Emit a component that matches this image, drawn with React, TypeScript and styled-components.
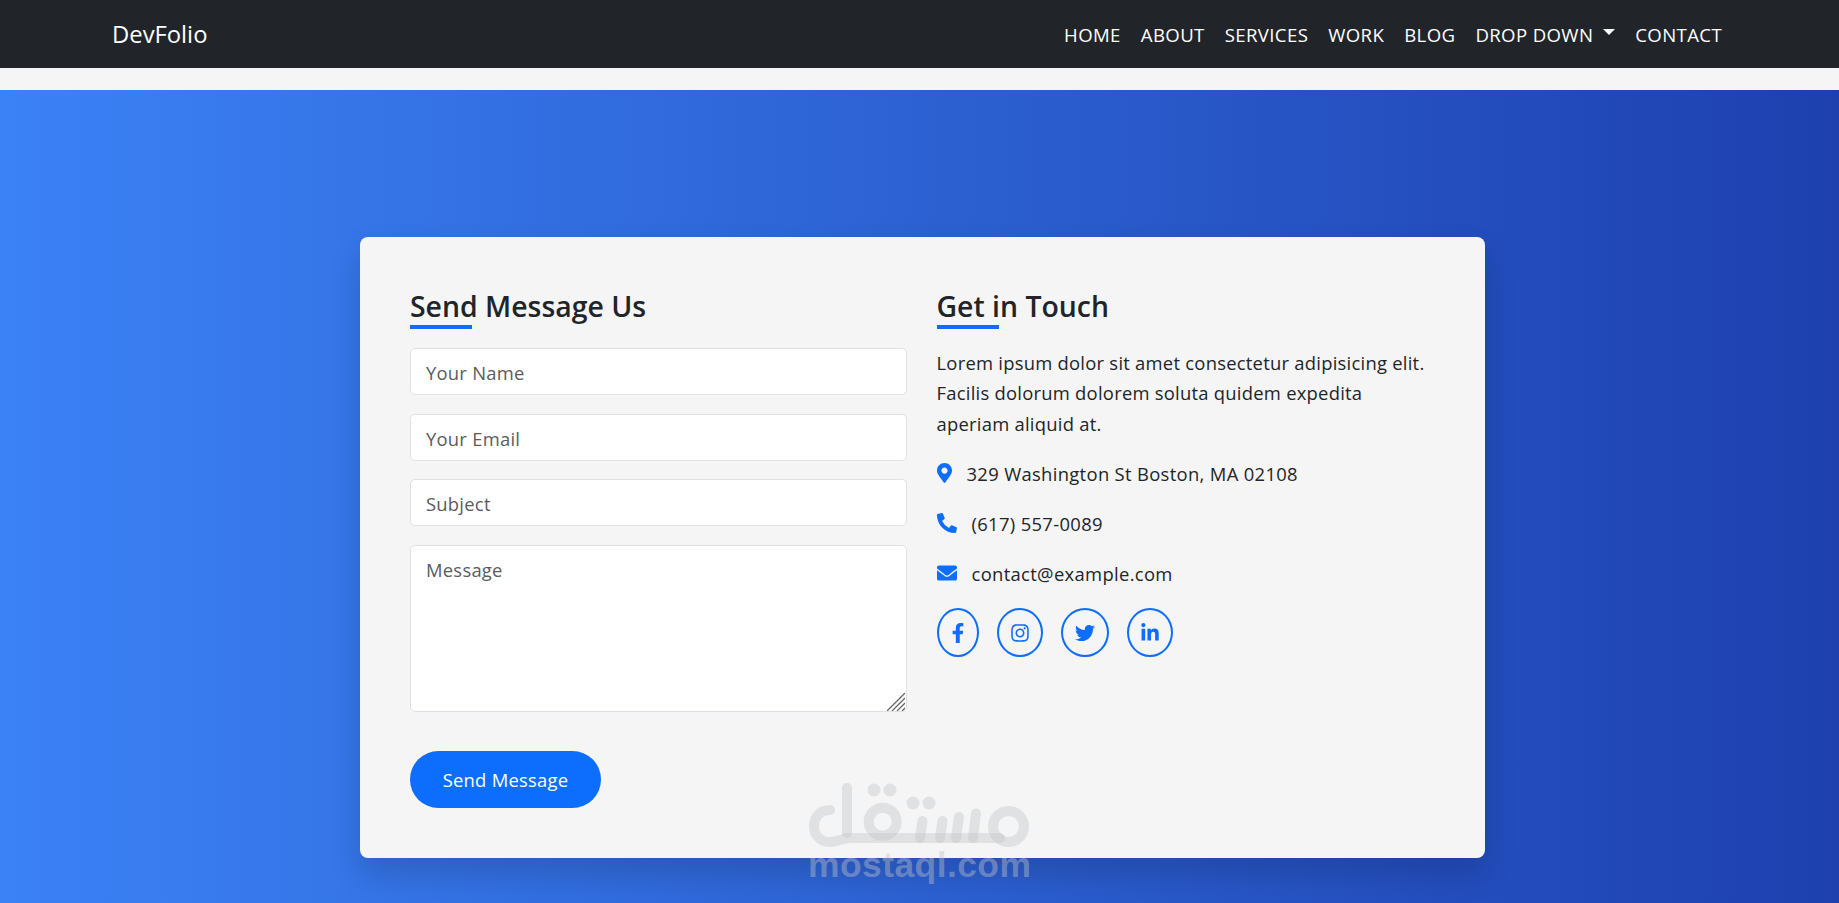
import React from "react";
import styled, { createGlobalStyle } from "styled-components";
import {
  FaEnvelope,
  FaFacebookF,
  FaInstagram,
  FaLinkedinIn,
  FaMapMarkerAlt,
  FaPhoneAlt,
  FaTwitter,
} from "react-icons/fa";

const GlobalStyle = createGlobalStyle`
  * {
    box-sizing: border-box;
  }

  html,
  body {
    margin: 0;
    height: 100%;
    background: #f5f5f5;
    font-family: "Open Sans", "Noto Sans", sans-serif;
    color: #212529;
  }
`;

const Navbar = styled.nav`
  height: 68px;
  padding: 0 117px 0 112px;
  display: flex;
  align-items: center;
  justify-content: space-between;
  background: #212529;
  color: #fff;
`;

const Brand = styled.a`
  font-size: 23.8px;
`;

const NavList = styled.div`
  display: flex;
  align-items: center;
  gap: 20px;
`;

const NavLink = styled.a`
  display: flex;
  align-items: center;
  font-size: 18.6px;
  letter-spacing: 0.37px;
`;

const Caret = styled.span`
  margin-left: 10px;
  margin-top: -4px;
  border-top: 6px solid #fff;
  border-left: 6px solid transparent;
  border-right: 6px solid transparent;
`;

const Section = styled.section`
  margin-top: 22px;
  height: 813px;
  padding-top: 147px;
  background: linear-gradient(90deg, #3b82f6, #1e40af);
`;

const Card = styled.div`
  width: 1125px;
  height: 621px;
  margin-left: 360px;
  padding: 50px;
  display: grid;
  grid-template-columns: 496.5px 1fr;
  column-gap: 30px;
  background: #f5f5f5;
  border-radius: 8px;
  box-shadow: 0 16px 32px rgba(0, 0, 0, 0.16);
`;

const Column = styled.div`
  display: flex;
  flex-direction: column;
`;

const Heading = styled.h2`
  position: relative;
  height: 40px;
  margin: 0 0 21px;
  font-size: 28.4px;
  line-height: 38px;
  font-weight: 600;

  &::after {
    content: "";
    position: absolute;
    left: 0;
    bottom: -2px;
    width: 62px;
    height: 4px;
    background: #0d6efd;
  }
`;

const Form = styled.form`
  display: flex;
  flex-direction: column;
  gap: 18.6px;
`;

const field = `
  width: 100%;
  padding: 10px 15px 8px;
  display: block;
  background: #fff;
  border: 1px solid #dee2e6;
  border-radius: 5px;
  outline: none;
  font-family: "Open Sans", "Noto Sans", sans-serif;
  font-size: 18.4px;
  letter-spacing: 0.25px;
  line-height: 27px;

  &::placeholder {
    color: #595c5f;
    opacity: 1;
  }
`;

const Input = styled.input`
  ${field}
  height: 47px;
`;

const MessageBox = styled.div`
  position: relative;
  height: 167px;
`;

const TextArea = styled.textarea`
  ${field}
  height: 100%;
  resize: none;
`;

const ResizeGrip = styled.svg`
  position: absolute;
  right: 2px;
  bottom: 1px;
  width: 18px;
  height: 18px;
`;

const SendButton = styled.button`
  width: 191px;
  height: 57px;
  margin-top: 21px;
  border: 0;
  border-radius: 29px;
  background: #0d6efd;
  color: #fff;
  font-family: "Open Sans", "Noto Sans", sans-serif;
  font-size: 18.4px;
  letter-spacing: 0.25px;
`;

const Paragraph = styled.p`
  margin: 0 0 19px;
  font-size: 18.4px;
  line-height: 30.4px;
  letter-spacing: 0.25px;
`;

const ContactRow = styled.div<{ $iconWidth: number }>`
  height: 30px;
  margin-bottom: 20px;
  display: flex;
  align-items: center;
  gap: 15px;
  font-size: 18.4px;
  letter-spacing: 0.33px;
  color: #212529;

  svg {
    width: ${(props) => props.$iconWidth}px;
    height: 20px;
    color: #0d6efd;
    flex-shrink: 0;
  }
`;

const SocialRow = styled.div`
  display: flex;
  gap: 18px;
`;

const SocialLink = styled.a<{ $width: number }>`
  width: ${(props) => props.$width}px;
  height: 49px;
  display: flex;
  align-items: center;
  justify-content: center;
  border: 2px solid #0d6efd;
  border-radius: 50%;
  color: #0d6efd;
  font-size: 20px;
`;

const Watermark = styled.div`
  position: absolute;
  left: 808px;
  top: 783px;
  width: 224px;
  color: rgba(195, 197, 200, 0.42);
  pointer-events: none;

  svg {
    display: block;
  }
`;

const WatermarkUrl = styled.div`
  margin-top: -3px;
  font-family: "Liberation Sans", Arial, sans-serif;
  font-size: 35.5px;
  line-height: 38px;
  font-weight: 700;
  letter-spacing: 0.4px;
`;

// mostaql logo, drawn with round strokes
const WatermarkLogo = () => (
  <svg width="224" height="66" viewBox="0 0 224 66" fill="none" aria-label="mostaql">
    <g stroke="currentColor" strokeWidth="10" strokeLinecap="round" strokeLinejoin="round">
      <path d="M22 27C11 27 6 35 6 43C6 53 13 59 22 59C30 59 34 55 42 55H192" />
      <path d="M39 5V50" />
      <circle cx="74.7" cy="38.7" r="14" />
      <path d="M112 55L114.5 38" />
      <path d="M132 55L134.5 38" />
      <path d="M148 55L151 34" />
      <path d="M165 55L168 30.5" />
      <circle cx="200.5" cy="43.5" r="15.5" />
    </g>
    <g fill="currentColor">
      <circle cx="66" cy="7" r="6.5" />
      <circle cx="82" cy="7" r="6.5" />
      <circle cx="105" cy="20" r="6.5" />
      <circle cx="121" cy="20" r="6.5" />
    </g>
  </svg>
);

const App: React.FC = () => {
  return (
    <>
      <GlobalStyle />
      <Navbar>
        <Brand>DevFolio</Brand>
        <NavList>
          <NavLink>HOME</NavLink>
          <NavLink>ABOUT</NavLink>
          <NavLink>SERVICES</NavLink>
          <NavLink>WORK</NavLink>
          <NavLink>BLOG</NavLink>
          <NavLink>
            DROP DOWN
            <Caret />
          </NavLink>
          <NavLink>CONTACT</NavLink>
        </NavList>
      </Navbar>

      <Section>
        <Card>
          <Column>
            <Heading>Send Message Us</Heading>
            <Form>
              <Input placeholder="Your Name" />
              <Input placeholder="Your Email" />
              <Input placeholder="Subject" />
              <MessageBox>
                <TextArea placeholder="Message" />
                <ResizeGrip viewBox="0 0 18 18" stroke="#666" strokeWidth="1.3">
                  <path d="M0 18L18 0M5 18L18 5M10 18L18 10M15 18L18 15" />
                </ResizeGrip>
              </MessageBox>
              <SendButton type="button">Send Message</SendButton>
            </Form>
          </Column>

          <Column>
            <Heading>Get in Touch</Heading>
            <Paragraph>
              Lorem ipsum dolor sit amet consectetur adipisicing elit. Facilis
              dolorum dolorem soluta quidem expedita aperiam aliquid at.
            </Paragraph>
            <ContactRow $iconWidth={15}>
              <FaMapMarkerAlt />
              329 Washington St Boston, MA 02108
            </ContactRow>
            <ContactRow $iconWidth={20}>
              <FaPhoneAlt />
              (617) 557-0089
            </ContactRow>
            <ContactRow $iconWidth={20}>
              <FaEnvelope />
              contact@example.com
            </ContactRow>
            <SocialRow>
              <SocialLink $width={42}>
                <FaFacebookF />
              </SocialLink>
              <SocialLink $width={46}>
                <FaInstagram />
              </SocialLink>
              <SocialLink $width={48}>
                <FaTwitter />
              </SocialLink>
              <SocialLink $width={46}>
                <FaLinkedinIn />
              </SocialLink>
            </SocialRow>
          </Column>
        </Card>
      </Section>

      <Watermark>
        <WatermarkLogo />
        <WatermarkUrl>mostaql.com</WatermarkUrl>
      </Watermark>
    </>
  );
};

export default App;
